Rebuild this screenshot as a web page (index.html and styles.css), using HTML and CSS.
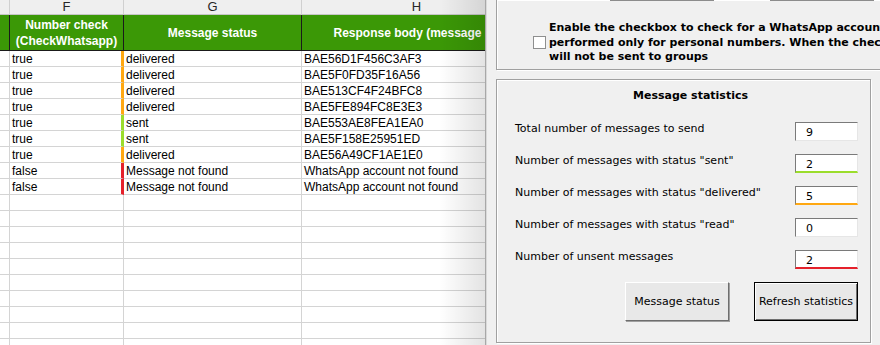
FILE: index.html
```html
<!DOCTYPE html>
<html>
<head>
    <title>Message statistics</title>
    <link rel="stylesheet" href="styles.css">
</head>
<body>
    <div class="screen">
        <div class="sheet">
            <div class="col-heads">
                <div class="ch col-e"></div>
                <div class="ch col-f">F</div>
                <div class="ch col-g">G</div>
                <div class="ch col-h">H</div>
            </div>
            <div class="head-row">
                <div class="cell col-e"></div>
                <div class="cell col-f">Number check<br>(CheckWhatsapp)</div>
                <div class="cell col-g">Message status</div>
                <div class="cell col-h">Response body (message id)</div>
            </div>
            <div class="row"><div class="cell col-e"></div><div class="cell col-f mark-delivered">true</div><div class="cell col-g">delivered</div><div class="cell col-h">BAE56D1F456C3AF3</div></div>
            <div class="row"><div class="cell col-e"></div><div class="cell col-f mark-delivered">true</div><div class="cell col-g">delivered</div><div class="cell col-h">BAE5F0FD35F16A56</div></div>
            <div class="row"><div class="cell col-e"></div><div class="cell col-f mark-delivered">true</div><div class="cell col-g">delivered</div><div class="cell col-h">BAE513CF4F24BFC8</div></div>
            <div class="row"><div class="cell col-e"></div><div class="cell col-f mark-delivered">true</div><div class="cell col-g">delivered</div><div class="cell col-h">BAE5FE894FC8E3E3</div></div>
            <div class="row"><div class="cell col-e"></div><div class="cell col-f mark-sent">true</div><div class="cell col-g">sent</div><div class="cell col-h">BAE553AE8FEA1EA0</div></div>
            <div class="row"><div class="cell col-e"></div><div class="cell col-f mark-sent">true</div><div class="cell col-g">sent</div><div class="cell col-h">BAE5F158E25951ED</div></div>
            <div class="row"><div class="cell col-e"></div><div class="cell col-f mark-delivered">true</div><div class="cell col-g">delivered</div><div class="cell col-h">BAE56A49CF1AE1E0</div></div>
            <div class="row"><div class="cell col-e"></div><div class="cell col-f mark-failed">false</div><div class="cell col-g">Message not found</div><div class="cell col-h">WhatsApp account not found</div></div>
            <div class="row"><div class="cell col-e"></div><div class="cell col-f mark-failed">false</div><div class="cell col-g">Message not found</div><div class="cell col-h">WhatsApp account not found</div></div>
            <div class="row"><div class="cell col-e"></div><div class="cell col-f"></div><div class="cell col-g"></div><div class="cell col-h"></div></div>
            <div class="row"><div class="cell col-e"></div><div class="cell col-f"></div><div class="cell col-g"></div><div class="cell col-h"></div></div>
            <div class="row"><div class="cell col-e"></div><div class="cell col-f"></div><div class="cell col-g"></div><div class="cell col-h"></div></div>
            <div class="row"><div class="cell col-e"></div><div class="cell col-f"></div><div class="cell col-g"></div><div class="cell col-h"></div></div>
            <div class="row"><div class="cell col-e"></div><div class="cell col-f"></div><div class="cell col-g"></div><div class="cell col-h"></div></div>
            <div class="row"><div class="cell col-e"></div><div class="cell col-f"></div><div class="cell col-g"></div><div class="cell col-h"></div></div>
            <div class="row"><div class="cell col-e"></div><div class="cell col-f"></div><div class="cell col-g"></div><div class="cell col-h"></div></div>
            <div class="row"><div class="cell col-e"></div><div class="cell col-f"></div><div class="cell col-g"></div><div class="cell col-h"></div></div>
            <div class="row"><div class="cell col-e"></div><div class="cell col-f"></div><div class="cell col-g"></div><div class="cell col-h"></div></div>
            <div class="row"><div class="cell col-e"></div><div class="cell col-f"></div><div class="cell col-g"></div><div class="cell col-h"></div></div>
        </div>

        <div class="dialog">
            <div class="frame options-frame">
                <div class="button-stubs">
                    <span class="stub"></span>
                    <span class="stub"></span>
                </div>
                <div class="check-row">
                    <span class="checkbox"></span>
                    <div class="check-label">Enable the checkbox to check for a WhatsApp account before sending. The check is<br>performed only for personal numbers. When the checkbox is enabled, messages<br>will not be sent to groups</div>
                </div>
            </div>

            <div class="frame stats-frame">
                <div class="stats-title">Message statistics</div>
                <div class="stat-row">
                    <span class="stat-label">Total number of messages to send</span>
                    <span class="stat-box">9</span>
                </div>
                <div class="stat-row">
                    <span class="stat-label">Number of messages with status "sent"</span>
                    <span class="stat-box line-sent">2</span>
                </div>
                <div class="stat-row">
                    <span class="stat-label">Number of messages with status "delivered"</span>
                    <span class="stat-box line-delivered">5</span>
                </div>
                <div class="stat-row">
                    <span class="stat-label">Number of messages with status "read"</span>
                    <span class="stat-box">0</span>
                </div>
                <div class="stat-row">
                    <span class="stat-label">Number of unsent messages</span>
                    <span class="stat-box line-failed">2</span>
                </div>
                <div class="button-row">
                    <button type="button" class="win-btn">Message status</button>
                    <button type="button" class="win-btn default-btn">Refresh statistics</button>
                </div>
            </div>
        </div>
    </div>
</body>
</html>
```

FILE: styles.css
```css
body {
    margin: 0;
    background-color: #ffffff;
    font-family: "Liberation Sans", Arial, sans-serif;
}

.screen {
    display: flex;
    width: 880px;
    height: 345px;
    overflow: hidden;
}

/* spreadsheet */

.sheet {
    position: relative;
    width: 486px;
    flex-shrink: 0;
    overflow: hidden;
    font-size: 12px;
    color: #000000;
}

.sheet::after {
    content: "";
    position: absolute;
    top: 0;
    right: 0;
    bottom: 0;
    width: 46px;
    background: linear-gradient(to right, rgba(0, 0, 0, 0), rgba(0, 0, 0, 0.11));
    border-right: 1px solid #a8a8a8;
}

.col-heads,
.head-row,
.row {
    display: flex;
    width: 540px;
}

.ch,
.cell {
    box-sizing: border-box;
    flex-shrink: 0;
    border-right: 1px solid #d4d4d4;
    border-bottom: 1px solid #d4d4d4;
    white-space: nowrap;
    overflow: hidden;
}

.col-e { width: 10px; }
.col-f { width: 114px; }
.col-g { width: 178px; }
.col-h { width: 230px; }

.ch {
    height: 15px;
    background-color: #efefef;
    border-bottom-color: #c6c6c6;
    border-right-color: #d0d0d0;
    text-align: center;
    font-size: 13px;
    line-height: 14px;
    color: #262626;
}

.head-row .cell {
    height: 36px;
    background-color: #3b9806;
    border-right-color: #1a1a1a;
    border-bottom-color: #1a1a1a;
    color: #ffffff;
    font-weight: bold;
    line-height: 16px;
    display: flex;
    align-items: center;
    justify-content: center;
    text-align: center;
}

.row .cell {
    height: 16px;
    padding: 1px 2px 0;
    line-height: 14px;
}

.mark-delivered { border-right: 3px solid #ffa812; }
.mark-sent { border-right: 3px solid #9bdd2c; }
.mark-failed { border-right: 3px solid #e5212b; }

/* dialog */

.dialog {
    flex: 1;
    background-color: #f0f0f0;
    border-left: 1px solid #dadada;
    padding-left: 9px;
    overflow: hidden;
    font-family: "DejaVu Sans", Tahoma, sans-serif;
    font-size: 11px;
    color: #000000;
}

.frame {
    box-sizing: border-box;
    border: 1px solid #a0a0a0;
    box-shadow: inset 1px 1px 0 #ffffff, 1px 1px 0 #ffffff;
}

.options-frame {
    width: 420px;
    height: 70px;
    border-top: none;
}

.button-stubs {
    display: flex;
    gap: 56px;
    padding-left: 113px;
}

.stub {
    width: 104px;
    height: 1px;
    background-color: #8c8c8c;
}

.check-row {
    display: flex;
    align-items: center;
    gap: 3px;
    padding: 20px 0 0 36px;
}

.checkbox {
    box-sizing: border-box;
    width: 13px;
    height: 13px;
    flex-shrink: 0;
    background-color: #ffffff;
    border: 1px solid #8e8f8f;
    margin-top: -1px;
}

.check-label {
    font-weight: bold;
    line-height: 14.5px;
    white-space: nowrap;
    letter-spacing: -0.02px;
}

.stats-frame {
    width: 375px;
    height: 264px;
    margin-top: 9px;
    padding: 8px 12px 0 18px;
}

.stats-title {
    text-align: center;
    font-weight: bold;
    line-height: 16px;
    padding-left: 8px;
    margin-bottom: 18px;
}

.stat-row {
    display: flex;
    justify-content: space-between;
    align-items: flex-start;
    margin-bottom: 13px;
}

.stat-label {
    line-height: 13px;
}

.stat-box {
    box-sizing: border-box;
    width: 63px;
    height: 19px;
    padding: 3px 0 0 10px;
    background-color: #ffffff;
    border-top: 1px solid #7a7a7a;
    border-left: 1px solid #7a7a7a;
    border-right: 1px solid #e6e6e6;
    border-bottom: 1px solid #e6e6e6;
    line-height: 13px;
}

.line-sent { border-bottom: 2px solid #9bdd2c; }
.line-delivered { border-bottom: 2px solid #ffa812; }
.line-failed { border-bottom: 2px solid #e5212b; }

.button-row {
    display: flex;
    justify-content: flex-end;
    gap: 25px;
    margin-top: 7px;
}

.win-btn {
    box-sizing: border-box;
    width: 104px;
    height: 39px;
    padding: 0;
    background-color: #e8e8e8;
    border: 1px solid;
    border-color: #ffffff #6e6e6e #6e6e6e #ffffff;
    box-shadow: 1px 1px 0 #a0a0a0;
    font-family: "DejaVu Sans", Tahoma, sans-serif;
    font-size: 11px;
    color: #000000;
}

.default-btn {
    border: 1px solid #000000;
    box-shadow: inset 1px 1px 0 #ffffff, inset -1px -1px 0 #6e6e6e;
}
```
